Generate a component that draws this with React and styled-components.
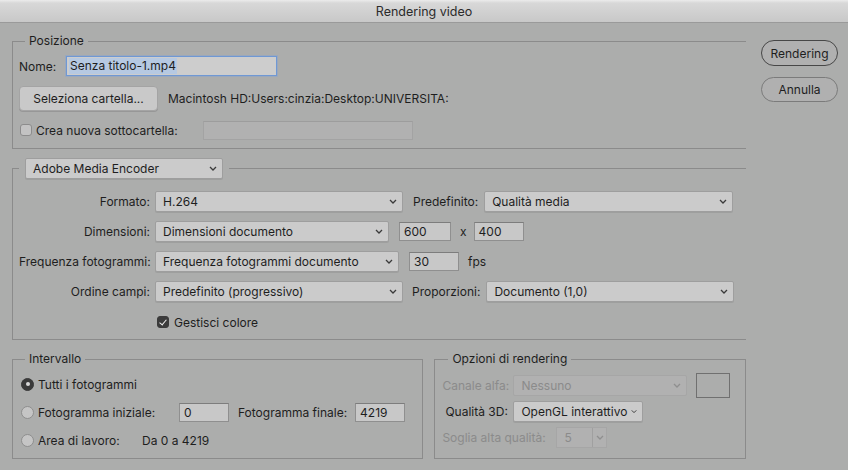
import React from "react";
import styled, { createGlobalStyle } from "styled-components";

const GlobalStyle = createGlobalStyle`
  html, body {
    margin: 0;
    padding: 0;
    background: #acadac;
  }
  body {
    font-family: "Inter", "Roboto", sans-serif;
    font-size: 12px;
    color: #1e1e1e;
  }
`;

const Chevron = ({ color = "#3a3a3a" }) => (
  <svg width="8" height="5" viewBox="0 0 8 5">
    <path d="M1 1l3 3 3-3" stroke={color} strokeWidth="1.3" fill="none" />
  </svg>
);

const Select = ({ value, w, disabled, ml }) => (
  <SelectBox $w={w} $disabled={disabled} $ml={ml}>
    <span>{value}</span>
    <Chevron color={disabled ? "#8f8f8f" : "#3a3a3a"} />
  </SelectBox>
);

const App = () => {
  return (
    <>
      <GlobalStyle />
      <Window>
        <TitleBar>Rendering video</TitleBar>
        <Content>
          <MainCol>
            {/* Posizione */}
            <Group $open $pad="6px 0 7px 6px">
              <Legend>Posizione</Legend>
              <Stack $gap={8}>
                <Row $h={22}>
                  <Label $w={47}>Nome:</Label>
                  <NameField>
                    <Selected>Senza titolo-1.mp4</Selected>
                  </NameField>
                </Row>
                <Row $h={26}>
                  <PushButton>Seleziona cartella...</PushButton>
                  <PathText>Macintosh HD:Users:cinzia:Desktop:UNIVERSITA:</PathText>
                </Row>
                <Row $h={22}>
                  <Check $ml={1} />
                  <Label $w={167} $ml={4}>Crea nuova sottocartella:</Label>
                  <Field $w={210} $disabled />
                </Row>
              </Stack>
            </Group>

            {/* Encoder */}
            <Group $open $pad="11px 0 7px 6px" $mt={9}>
              <LegendWrap>
                <Select value="Adobe Media Encoder" w={198} />
              </LegendWrap>
              <Stack $gap={8}>
                <Row $h={22}>
                  <Label $w={131} $right>Formato:</Label>
                  <Select value="H.264" w={248} ml={5} />
                  <Label $ml={10}>Predefinito:</Label>
                  <Select value="Qualità media" w={249} ml={6} />
                </Row>
                <Row $h={22}>
                  <Label $w={131} $right>Dimensioni:</Label>
                  <Select value="Dimensioni documento" w={234} ml={5} />
                  <Field $w={52} $ml={10}>600</Field>
                  <Label $ml={9}>x</Label>
                  <Field $w={50} $ml={7}>400</Field>
                </Row>
                <Row $h={22}>
                  <Label $w={131} $right>Frequenza fotogrammi:</Label>
                  <Select value="Frequenza fotogrammi documento" w={244} ml={5} />
                  <Field $w={50} $ml={10}>30</Field>
                  <Label $ml={9}>fps</Label>
                </Row>
                <Row $h={22}>
                  <Label $w={131} $right>Ordine campi:</Label>
                  <Select value="Predefinito (progressivo)" w={248} ml={5} />
                  <Label $ml={9}>Proporzioni:</Label>
                  <Select value="Documento (1,0)" w={248} ml={6} />
                </Row>
                <Row $h={20} $mt={2}>
                  <Check $checked $ml={138} />
                  <Label $ml={5}>Gestisci colore</Label>
                </Row>
              </Stack>
            </Group>

            <BottomRow>
              {/* Intervallo */}
              <Group $w={412} $pad="6px 0 7px 6px">
                <Legend>Intervallo</Legend>
                <Stack $gap={6}>
                  <Row $h={22}>
                    <Radio $on />
                    <Label $ml={4}>Tutti i fotogrammi</Label>
                  </Row>
                  <Row $h={22}>
                    <Radio />
                    <Label $w={141} $ml={4}>Fotogramma iniziale:</Label>
                    <Field $w={50}>0</Field>
                    <Label $ml={9}>Fotogramma finale:</Label>
                    <Field $w={50} $ml={8}>4219</Field>
                  </Row>
                  <Row $h={22}>
                    <Radio />
                    <Label $w={104} $ml={4}>Area di lavoro:</Label>
                    <Label>Da 0 a 4219</Label>
                  </Row>
                </Stack>
              </Group>

              {/* Opzioni di rendering */}
              <Group $w={312} $pad="5px 0 9px 6px">
                <Legend $ml={7}>Opzioni di rendering</Legend>
                <Row $h={26}>
                  <Label $w={71} $ml={1} $disabled>Canale alfa:</Label>
                  <Select value="Nessuno" w={174} disabled />
                  <Swatch />
                </Row>
                <Row $h={22} $mt={2}>
                  <Label $w={68} $ml={4}>Qualità 3D:</Label>
                  <Select value="OpenGL interattivo" w={130} />
                </Row>
                <Row $h={22} $mt={4}>
                  <Label $w={114} $ml={1} $disabled>Soglia alta qualità:</Label>
                  <StepSelect>
                    <span>5</span>
                    <StepArrow>
                      <Chevron color="#8f8f8f" />
                    </StepArrow>
                  </StepSelect>
                </Row>
              </Group>
            </BottomRow>
          </MainCol>

          <SideCol>
            <PillButton $default>Rendering</PillButton>
            <PillButton>Annulla</PillButton>
          </SideCol>
        </Content>
      </Window>
    </>
  );
};

const Window = styled.div`
  width: 848px;
  height: 470px;
  display: flex;
  flex-direction: column;
  overflow: hidden;
  background: #acadac;
`;

const TitleBar = styled.div`
  height: 22px;
  flex: none;
  background: linear-gradient(#ececec 0px, #d8d8d8 3px, #c8c8c8 100%);
  border-bottom: 1px solid #9a9a9a;
  display: flex;
  align-items: center;
  justify-content: center;
  font-size: 12.5px;
  color: #2b2b2b;
`;

const Content = styled.div`
  display: flex;
  gap: 15px;
  padding: 10px 0 0 12px;
`;

const MainCol = styled.div`
  width: 734px;
  display: flex;
  flex-direction: column;
`;

const SideCol = styled.div`
  width: 77px;
  display: flex;
  flex-direction: column;
  gap: 11px;
  padding-top: 7px;
`;

const Group = styled.fieldset`
  margin: ${(p) => p.$mt || 0}px 0 0 0;
  padding: ${(p) => p.$pad};
  width: ${(p) => (p.$w ? `${p.$w}px` : "auto")};
  box-sizing: border-box;
  min-width: 0;
  border: 1px solid #8b8b8b;
  border-right: ${(p) => (p.$open ? "none" : "1px solid #8b8b8b")};
`;

const Legend = styled.legend`
  padding: 0 4px;
  margin-left: ${(p) => p.$ml || 6}px;
  line-height: 16px;
`;

const LegendWrap = styled.legend`
  padding: 0 6px;
  margin-left: 0;
  display: flex;
`;

const Stack = styled.div`
  display: flex;
  flex-direction: column;
  gap: ${(p) => p.$gap}px;
`;

const Row = styled.div`
  display: flex;
  align-items: center;
  height: ${(p) => p.$h}px;
  margin-top: ${(p) => p.$mt || 0}px;
`;

const BottomRow = styled.div`
  display: flex;
  gap: 11px;
  margin-top: 11px;
`;

const Label = styled.span`
  flex: none;
  width: ${(p) => (p.$w ? `${p.$w}px` : "auto")};
  margin-left: ${(p) => p.$ml || 0}px;
  text-align: ${(p) => (p.$right ? "right" : "left")};
  white-space: nowrap;
  color: ${(p) => (p.$disabled ? "#8b8b8b" : "#1e1e1e")};
`;

const SelectBox = styled.div`
  flex: none;
  box-sizing: border-box;
  width: ${(p) => p.$w}px;
  height: 21px;
  margin-left: ${(p) => p.$ml || 0}px;
  padding: 0 5px 0 7px;
  display: flex;
  align-items: center;
  justify-content: space-between;
  gap: 4px;
  border-radius: 2px;
  background: ${(p) => (p.$disabled ? "#b1b1b1" : "#cbcbcb")};
  border: 1px solid ${(p) => (p.$disabled ? "#a6a6a6" : "#9e9e9e")};
  box-shadow: ${(p) => (p.$disabled ? "none" : "0 1px 0 rgba(0,0,0,0.08)")};
  color: ${(p) => (p.$disabled ? "#8b8b8b" : "#1e1e1e")};
  white-space: nowrap;
`;

const StepSelect = styled.div`
  flex: none;
  box-sizing: border-box;
  width: 51px;
  height: 21px;
  display: flex;
  align-items: center;
  padding-left: 7px;
  background: #b1b1b1;
  border: 1px solid #a6a6a6;
  color: #8b8b8b;

  span {
    flex: 1;
  }
`;

const StepArrow = styled.div`
  width: 13px;
  height: 100%;
  border-left: 1px solid #a0a0a0;
  display: flex;
  align-items: center;
  justify-content: center;
`;

const Field = styled.div`
  flex: none;
  box-sizing: border-box;
  width: ${(p) => p.$w}px;
  height: 19px;
  margin-left: ${(p) => p.$ml || 0}px;
  padding-left: 4px;
  display: flex;
  align-items: center;
  background: ${(p) => (p.$disabled ? "#b1b1b1" : "#c8c8c8")};
  border: 1px solid ${(p) => (p.$disabled ? "#a3a3a3" : "#8f8f8f")};
  border-top-color: ${(p) => (p.$disabled ? "#9d9d9d" : "#7d7d7d")};
`;

const NameField = styled.div`
  box-sizing: border-box;
  width: 211px;
  height: 20px;
  padding-left: 2px;
  display: flex;
  align-items: center;
  background: #cdcdcd;
  border: 1px solid #6f98d4;
  box-shadow: 0 0 0 1px rgba(120, 160, 220, 0.35);
`;

const Selected = styled.span`
  background: #b6c9e2;
  padding: 0 1px;
  line-height: 16px;
`;

const PushButton = styled.div`
  box-sizing: border-box;
  width: 139px;
  height: 25px;
  display: flex;
  align-items: center;
  justify-content: center;
  background: #c9c9c9;
  border: 1px solid #a4a4a4;
  border-radius: 4px;
  box-shadow: 0 1px 0 #979797;
`;

const PathText = styled.span`
  margin-left: 10px;
  white-space: nowrap;
`;

const Check = styled.div`
  flex: none;
  box-sizing: border-box;
  width: 12px;
  height: 12px;
  margin-left: ${(p) => p.$ml || 0}px;
  border-radius: 3px;
  background: ${(p) => (p.$checked ? "#3b3b3b" : "#c3c3c3")};
  border: 1px solid ${(p) => (p.$checked ? "#3b3b3b" : "#8c8c8c")};
  position: relative;

  &::after {
    content: "";
    display: ${(p) => (p.$checked ? "block" : "none")};
    position: absolute;
    left: 3px;
    top: 1px;
    width: 3px;
    height: 6px;
    border: solid #f0f0f0;
    border-width: 0 1.6px 1.6px 0;
    transform: rotate(40deg);
  }
`;

const Radio = styled.div`
  flex: none;
  box-sizing: border-box;
  width: 13px;
  height: 13px;
  margin-left: 2px;
  border-radius: 50%;
  background: ${(p) => (p.$on ? "#3a3a3a" : "#c5c5c5")};
  border: 1px solid ${(p) => (p.$on ? "#3a3a3a" : "#8e8e8e")};
  display: flex;
  align-items: center;
  justify-content: center;

  &::after {
    content: "";
    display: ${(p) => (p.$on ? "block" : "none")};
    width: 4px;
    height: 4px;
    border-radius: 50%;
    background: #d8d8d8;
  }
`;

const Swatch = styled.div`
  box-sizing: border-box;
  width: 34px;
  height: 25px;
  margin-left: 9px;
  border: 1px solid #707070;
  background: #acadac;
`;

const PillButton = styled.div`
  box-sizing: border-box;
  height: ${(p) => (p.$default ? 26 : 25)}px;
  display: flex;
  align-items: center;
  justify-content: center;
  border-radius: 13px;
  border: 1px solid ${(p) => (p.$default ? "#474747" : "#7b7b7b")};
  background: #b0b0b0;
  color: #1e1e1e;
`;

export default App;
